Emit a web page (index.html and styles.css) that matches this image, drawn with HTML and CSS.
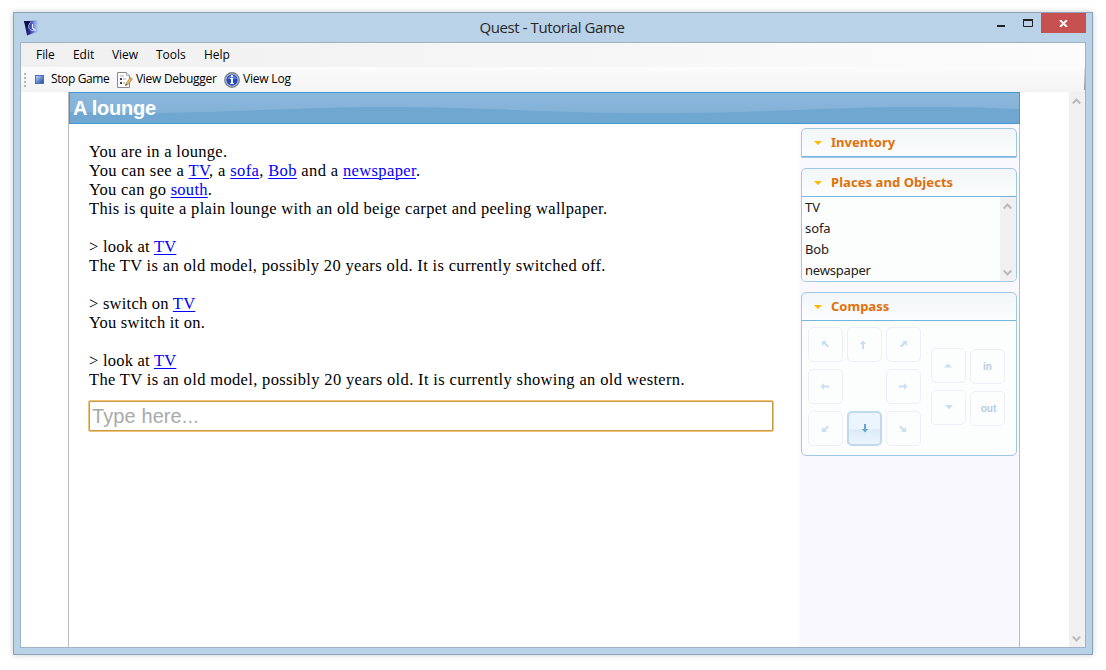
FILE: index.html
```html
<!DOCTYPE html>
<html lang="en">
<head>
<meta charset="utf-8">
<title>Quest - Tutorial Game</title>
<link rel="stylesheet" href="styles.css">
</head>
<body>
<div class="window">
  <header class="titlebar">
    <svg class="app-icon" width="15" height="16" viewBox="0 0 15 16">
      <defs><linearGradient id="app" x1="0" x2="1" y1="0" y2="0"><stop offset="0" stop-color="#10125c"/><stop offset=".4" stop-color="#2c318c"/><stop offset=".75" stop-color="#8098dc"/><stop offset="1" stop-color="#b4ccf7"/></linearGradient></defs>
      <path d="M0 1h6l8-1v12l-4 1-7 2.500z" fill="url(#app)"/>
      <path d="M0 1h6L3 9z" fill="#090a48"/>
      <path d="M6.500 2.500C3.500 5 4.500 10.500 8.500 10.500S13 6 11.500 3.500" fill="none" stroke="#b5c4ee"/>
      <path d="M8.500 4v4l3 2.500" fill="none" stroke="#e0e9fc" stroke-width="1.200"/>
    </svg>
    <h1 class="title">Quest - Tutorial Game</h1>
    <div class="controls">
      <svg width="76" height="20" viewBox="0 0 76 20"><path d="M0 12h8v2H0z" fill="#222"/><path d="M26.500 7v6.500h9V7" fill="none" stroke="#222"/><path d="M26 6h10v2H26z" fill="#222"/></svg>
      <span class="close"><svg width="9" height="7" viewBox="0 0 9 7"><path d="M1 0l7 7M8 0L1 7" stroke="#fff" stroke-width="1.900"/></svg></span>
    </div>
  </header>
  <div class="client">
    <div class="bars">
      <nav class="menu"><span class="m-file">File</span><span class="m-edit">Edit</span><span class="m-view">View</span><span class="m-tools">Tools</span><span>Help</span></nav>
      <div class="toolbar">
        <svg class="grip" width="2" height="14" viewBox="0 0 2 14"><path d="M1 0v14" stroke="#b9b9b9" stroke-width="2" stroke-dasharray="2 2"/></svg>
        <span class="tool stop"><svg width="9" height="9" viewBox="0 0 9 9"><defs><linearGradient id="stop" x1="0" y1="0" x2="1" y2="1"><stop stop-color="#b9d2fa"/><stop offset="1" stop-color="#1c4ba8"/></linearGradient></defs><path d="M0 0h9v9H0z" fill="#4a70b5"/><path d="M1 1h7v7H1z" fill="url(#stop)"/></svg><span>Stop Game</span></span>
        <span class="tool debug"><svg width="16" height="16" viewBox="0 0 16 16"><path d="M.5.5h9l3 3v12H.5z" fill="#fff" stroke="#8a8a8a"/><path d="M9.500.5v3h3" fill="#eee" stroke="#aaa"/><path d="M3 7h2M3 11h2" stroke="#3b3b78" stroke-width="2"/><path d="M3 4h4M6 7h3M6 11h2" stroke="#aaa"/><path d="M8.500 13.500l1-3 4-5 2 1.500-4 5z" fill="#e7b458" stroke="#a5874f" stroke-width=".7"/><path d="M8.300 13.800l.6-2 1.200 1z" fill="#333"/></svg><span>View Debugger</span></span>
        <span class="tool log"><svg width="16" height="16" viewBox="0 0 16 16"><circle cx="8" cy="8" r="7.200" fill="#ccd1dc" stroke="#7c828e" stroke-width="1.400"/><circle cx="8" cy="8" r="5.700" fill="#2149c0"/><path d="M3.300 7a5 5 0 0 1 9.400 0" fill="#5c82df"/><path d="M7 3h2v2H7zM6 6h3v5h1v1H6v-1h1V7H6z" fill="#fff"/></svg><span>View Log</span></span>
      </div>
      <i class="bar-end"></i>
    </div>
    <div class="viewport">
      <main class="page">
        <div class="location">
          <svg class="wave" width="949" height="30" viewBox="0 0 949 30"><path d="M0 19C140 23 220 13 330 14S470 20 590 20 750 14 840 14 910 15 949 16V30H0z" fill="#6fa7d1"/></svg>
          <h2>A lounge</h2>
        </div>
        <div class="columns">
          <section class="story">
            <p class="t1">You are in a lounge.</p>
            <p class="t2">You can see a <a>TV</a>, a <a>sofa</a>, <a>Bob</a> and a <a>newspaper</a>.</p>
            <p class="t3">You can go <a>south</a>.</p>
            <p class="t4">This is quite a plain lounge with an old beige carpet and peeling wallpaper.</p>
            <p class="gap t5">&gt; look at <a>TV</a></p>
            <p class="t6">The TV is an old model, possibly 20 years old. It is currently switched off.</p>
            <p class="gap t7">&gt; switch on <a>TV</a></p>
            <p class="t8">You switch it on.</p>
            <p class="gap t5">&gt; look at <a>TV</a></p>
            <p class="t9">The TV is an old model, possibly 20 years old. It is currently showing an old western.</p>
            <div class="command">Type here...</div>
          </section>
          <aside class="panes">
            <section class="pane inventory"><h3><i></i><span class="h-inv">Inventory</span></h3></section>
            <section class="pane places"><h3><i></i><span class="h-pla">Places and Objects</span></h3>
              <div class="list"><ul><li>TV</li><li>sofa</li><li>Bob</li><li class="l-news">newspaper</li></ul>
                <div class="scroll"><svg width="9" height="7" viewBox="0 0 9 7"><path d="M.8 5.500l3.700-4 3.700 4" fill="none" stroke="#bbb" stroke-width="2"/></svg><svg width="9" height="7" viewBox="0 0 9 7"><path d="M.8 1.500l3.700 4 3.700-4" fill="none" stroke="#bbb" stroke-width="2"/></svg></div>
              </div>
            </section>
            <section class="pane compass"><h3><i></i><span class="h-com">Compass</span></h3>
              <div class="compass-body">
                <div class="rose">
                  <b><svg width="9" height="9" viewBox="0 0 9 9"><path d="M1 1h5L4.500 2.500 8 6 6.500 7.500 3 4 1 6z"/></svg></b>
                  <b class="n"><svg width="9" height="9" viewBox="0 0 9 9"><path d="M4 .5 7.200 4H5v5H3V4H.8z"/></svg></b>
                  <b><svg width="9" height="9" viewBox="0 0 9 9"><path d="M8 1H3l1.500 1.500L1 6l1.500 1.500L6 4l2 2z"/></svg></b>
                  <b class="w"><svg width="9" height="9" viewBox="0 0 9 9"><path d="M.5 4.500 4 1.200v2.300h5v2H4v2.300z"/></svg></b>
                  <span></span>
                  <b><svg width="9" height="9" viewBox="0 0 9 9"><path d="M8.500 4.500 5 1.200v2.300H0v2h5v2.300z"/></svg></b>
                  <b><svg width="9" height="9" viewBox="0 0 9 9"><path d="M1 8h5L4.500 6.500 8 3 6.500 1.500 3 5 1 3z"/></svg></b>
                  <b class="on"><svg width="9" height="9" viewBox="0 0 9 9"><path d="M5 8.500 8.200 5H6V0H4v5H1.800z"/></svg></b>
                  <b class="se"><svg width="9" height="9" viewBox="0 0 9 9"><path d="M8 8H3l1.500-1.500L1 3l1.500-1.500L6 5l2-2z"/></svg></b>
                </div>
                <div class="levels"><b><svg width="9" height="9" viewBox="0 0 9 9"><path d="M0 6.500h8l-4-4z"/></svg></b><b><svg width="9" height="9" viewBox="0 0 9 9"><path d="M1 2h8L5 6z"/></svg></b></div>
                <div class="levels inout"><b>in</b><b class="out">out</b></div>
              </div>
            </section>
          </aside>
        </div>
      </main>
      <div class="scroll main-scroll"><svg width="9" height="7" viewBox="0 0 9 7"><path d="M.8 5.500l3.700-4 3.700 4" fill="none" stroke="#bbb" stroke-width="2"/></svg><svg width="9" height="7" viewBox="0 0 9 7"><path d="M.8 1.500l3.700 4 3.700-4" fill="none" stroke="#bbb" stroke-width="2"/></svg></div>
    </div>
  </div>
</div>
</body>
</html>
```
FILE: styles.css
```css
* { box-sizing: border-box; margin: 0; padding: 0; }
body { background: #fff; padding: 12px 13px; height: 670px; overflow: hidden; }
svg { display: block; flex: none; }
.window { width: 1080px; height: 643px; border: 1px solid #8ba3b8; background: #bad2e7; padding: 0 6px 6px; box-shadow: 0 0 6px rgba(0,0,0,.2); display: flex; flex-direction: column; }
.titlebar { height: 29px; display: flex; flex: none; }
.app-icon { margin: 7px 0 0 4px; }
.title { flex: 1; text-align: center; font: 400 15px/29px "Open Sans", sans-serif; color: #262626; padding-left: 68px; letter-spacing: -.42px; white-space: nowrap; }
.controls { display: flex; }
.controls > svg { margin-right: -32px; }
.close { width: 45px; height: 20px; background: #c75050; display: flex; align-items: center; justify-content: center; }
.client { flex: 1; border: 1px solid #9db1c7; background: #fff; display: flex; flex-direction: column; min-height: 0; }
.bars { height: 49px; flex: none; position: relative; background: linear-gradient(90deg, #f0f0f0, #fcfcfc); font: 12px/24px "Open Sans", sans-serif; color: #000; white-space: nowrap; }
.menu { height: 24px; display: flex; padding-left: 15px; letter-spacing: -.05px; }
.m-file { width: 37px; } .m-edit { width: 39px; } .m-view { width: 44px; } .m-tools { width: 48px; }
.toolbar { height: 25px; display: flex; align-items: center; background: linear-gradient(#fcfcfc, #f3f3f3); }
.grip { margin-left: 3px; }
.tool { display: flex; align-items: center; }
.tool span { padding-bottom: 1px; }
.stop { margin-left: 9px; gap: 7px; width: 82px; letter-spacing: -.38px; }
.debug { gap: 3px; width: 107px; letter-spacing: -.28px; }
.log { gap: 3px; letter-spacing: -.2px; }
.bar-end { position: absolute; right: 0; top: 24px; width: 1px; height: 23px; background: linear-gradient(#eee, #999); }
.viewport { flex: 1; display: flex; min-height: 0; }
.page { width: 952px; margin-left: 47px; border: solid #bbb; border-width: 0 1px; display: flex; flex-direction: column; }
.location { height: 32px; flex: none; margin-right: -1px; border: 1px solid #4297d7; background: linear-gradient(#8bb7da, #80b0d6); position: relative; overflow: hidden; }
.wave { position: absolute; left: 0; top: 0; }
.location h2 { position: relative; font: 700 20px/30px "Liberation Sans", sans-serif; color: #fff; padding-left: 3px; letter-spacing: -.25px; }
.columns { flex: 1; display: flex; }
.story { width: 730px; padding: 18px 20px 0; font: 16.5px/19px "Liberation Serif", serif; color: #000; }
.story p { height: 19px; white-space: nowrap; }
.story .gap { margin-top: 19px; }
.story a { color: #00f; text-decoration: underline; text-decoration-thickness: 1px; text-underline-offset: 2px; }
.t1 { letter-spacing: .29px; }
.t2 { letter-spacing: .37px; }
.t3 { letter-spacing: .28px; }
.t4 { letter-spacing: .31px; }
.t5 { letter-spacing: .23px; }
.t6 { letter-spacing: .33px; }
.t7 { letter-spacing: .24px; }
.t8 { letter-spacing: .24px; }
.t9 { letter-spacing: .345px; }
.command { width: 686px; height: 32px; margin: 11px 0 0 -1px; border: 1px solid #f2c376; box-shadow: inset 0 0 0 1px #c99a45; border-radius: 2px; padding-left: 3px; font: 20px/31px "Liberation Sans", sans-serif; color: #a9a9a9; letter-spacing: .1px; }
.panes { flex: 1; background: #f9f8ff; padding: 4px 2px 0; }
.pane { border: 1px solid #a0c8e4; border-radius: 5px; background: #fcfdfd; overflow: hidden; }
.pane h3 { margin: -1px -1px 0; height: 29px; border: 1px solid #77b5e1; border-radius: 5px 5px 0 0; background: linear-gradient(#f2f6f8, #fcfdfd); font: 700 13px/27px "Noto Sans", sans-serif; color: #e17009; display: flex; align-items: center; white-space: nowrap; }
.pane h3 i { border: 4px solid transparent; border-top-color: #fbb900; border-bottom: 0; margin: 1px 9px 0 12px; }
.inventory { height: 30px; }
.inventory, .inventory h3 { border-bottom-left-radius: 1px; border-bottom-right-radius: 1px; }
.h-pla { letter-spacing: .07px; }
.places { height: 114px; margin-top: 10px; }
.compass { height: 164px; margin-top: 10px; }
.list { display: flex; height: 84px; font: 13px/21px "Noto Sans", sans-serif; color: #222; }
.list ul { flex: 1; list-style: none; padding-left: 3px; letter-spacing: -.1px; }
.list .l-news { letter-spacing: -.2px; }
.list .scroll { padding-right: 1px; }
.scroll { width: 16px; background: #f0f0f0; display: flex; flex-direction: column; justify-content: space-between; align-items: center; padding: 6px 0 5px; }
.main-scroll { margin-left: auto; padding-right: 1px; }
.compass-body { display: flex; padding: 6px 0 0 6px; }
.rose { display: grid; grid-template-columns: repeat(3, 35px); gap: 7px 4px; width: 123px; }
.compass-body b { width: 35px; height: 35px; border: 1px solid #edf0f9; border-radius: 5px; display: flex; align-items: center; justify-content: center; font: 700 10px "Liberation Sans", sans-serif; color: #b7cbdf; fill: #c7dff0; }
.compass-body .on { border: 2px solid #c1d9ea; background: linear-gradient(#ecf5fe 50%, #dcebf6 50%, #eaf4fc); fill: #62a5d3; }
.compass-body .n, .compass-body .w, .compass-body .se { padding-right: 2px; }
.compass-body .out { padding-left: 2px; }
.levels { width: 39px; display: flex; flex-direction: column; gap: 7px; padding-top: 21px; }
.inout { padding-top: 22px; }
```
